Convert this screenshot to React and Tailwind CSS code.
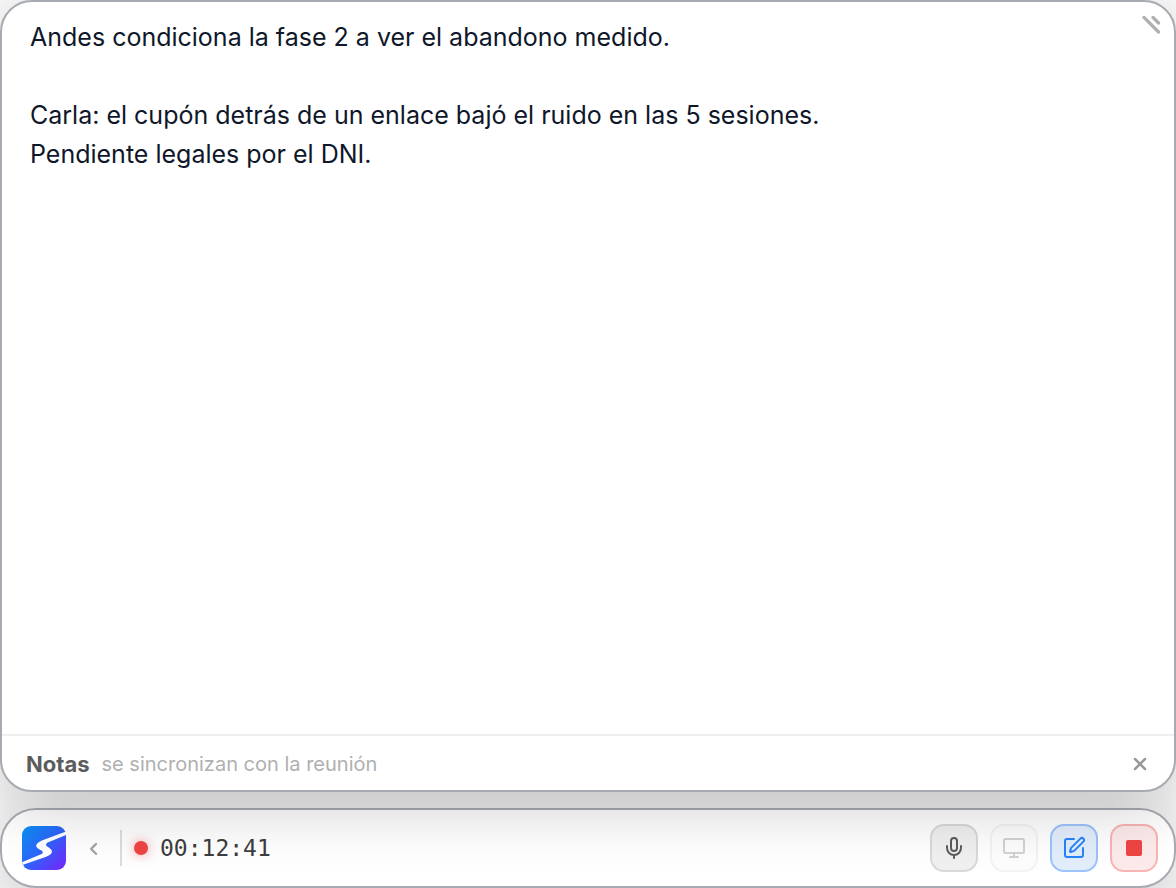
import { useState } from "react";
import { Mic, SquarePen } from "lucide-react";

const controlBase =
  "flex size-12 items-center justify-center rounded-[14px] border-2";

function Logo() {
  return (
    <svg viewBox="0 0 44 44" className="size-11" role="img" aria-label="Logo">
      <defs>
        <linearGradient id="logo-fill" x1="0" y1="0" x2="1" y2="1">
          <stop offset="0" stopColor="#0693f5" />
          <stop offset="0.5" stopColor="#2f64fb" />
          <stop offset="1" stopColor="#7a22fb" />
        </linearGradient>
      </defs>
      <rect width="44" height="44" rx="9" fill="url(#logo-fill)" />
      <path
        d="M44 5.400 L20.500 14.200 C14.500 16.500 12.500 19.800 16 22.600 C18 24.100 20.800 24.600 20.800 26.200 C20.800 27.600 19 28.400 16 29.600 L0 36.300 L1 38.800 L23.500 31 C28.500 29.200 31.300 26.800 29.300 23.800 C27.600 21.300 24 20.800 24 18.800 C24 17.300 25.500 16.600 27.500 15.800 L44 8.900 Z"
        fill="#fff"
      />
    </svg>
  );
}

function StrokeIcon({ children, className }) {
  return (
    <svg
      viewBox="0 0 24 24"
      fill="none"
      stroke="currentColor"
      strokeWidth="2"
      strokeLinecap="round"
      strokeLinejoin="round"
      className={className}
      aria-hidden="true"
    >
      {children}
    </svg>
  );
}

function NotesPanel() {
  const [notes, setNotes] = useState(
    "Andes condiciona la fase 2 a ver el abandono medido.\n\nCarla: el cupón detrás de un enlace bajó el ruido en las 5 sesiones.\nPendiente legales por el DNI."
  );
  return (
    <section className="relative z-10 flex grow flex-col overflow-hidden rounded-[32px] border-2 border-[#a7abb1] bg-white shadow-[0_16px_64px_rgba(0,0,0,0.2)]">
      <textarea
        aria-label="Notas de la reunión"
        value={notes}
        onChange={(e) => setNotes(e.target.value)}
        spellCheck={false}
        className="w-full grow resize-none bg-transparent px-7 py-4 text-[25px] leading-[39px] text-[#0f172a] outline-none"
      />
      <button
        type="button"
        aria-label="Cambiar tamaño"
        className="absolute top-3 right-3 text-[#b0b0b0]"
      >
        <svg viewBox="0 0 20 20" className="size-5" fill="none" stroke="currentColor" strokeWidth="3.3" strokeLinecap="round" aria-hidden="true">
          <path d="M2 3.400 L16.500 18 M11 3.400 L16.500 9" />
        </svg>
      </button>
      <footer className="flex h-14 items-center gap-3 border-t-2 border-[#efefef] px-6 pt-0.5">
        <h2 className="text-[22px] font-bold text-[#5c5c5c]">Notas</h2>
        <p className="text-[20px] text-[#b0b0b0]">se sincronizan con la reunión</p>
        <button type="button" aria-label="Cerrar notas" className="ml-auto text-[#999999]">
          <StrokeIcon className="size-5">
            <path d="M6 6 L18 18 M18 6 L6 18" strokeWidth="3" />
          </StrokeIcon>
        </button>
      </footer>
    </section>
  );
}

function RecorderBar() {
  return (
    <section className="flex h-20 items-center rounded-[36px] border-2 border-[#a7abb1] bg-white pr-4 pl-5 shadow-[0_16px_64px_rgba(0,0,0,0.2)]">
      <Logo />
      <button type="button" aria-label="Contraer" className="ml-4 flex w-6 justify-center text-[#a6a6a6]">
        <StrokeIcon className="size-5">
          <path d="M14.500 7 L8.500 13 L14.500 19" strokeWidth="2.7" />
        </StrokeIcon>
      </button>
      <div className="ml-3.5 h-9 w-0.5 bg-[#dddddd]" />
      <span className="ml-3 size-3.5 rounded-full bg-[#ef4444] shadow-[0_0_12px_rgba(239,68,68,0.5)]" />
      <time className="ml-3 font-['DejaVu_Sans_Mono',monospace] text-[23px] leading-8 text-[#3d3d3d]">
        00:12:41
      </time>
      <div className="ml-auto flex gap-3">
        <button type="button" aria-label="Micrófono" className={`${controlBase} border-[#d9d9d9] bg-[#f0f0f0] text-[#5c5c5c]`}>
          <Mic className="size-6" aria-hidden="true" />
        </button>
        <button type="button" aria-label="Compartir pantalla" className={`${controlBase} border-[#f3f3f3] bg-[#fdfdfd] text-[#d2d2d2]`}>
          <StrokeIcon className="size-6">
            <rect x="2" y="3" width="20" height="14" rx="1.5" />
            <path d="M12 17 V21 M8 21 H16" />
          </StrokeIcon>
        </button>
        <button type="button" aria-label="Notas" aria-pressed="true" className={`${controlBase} border-[#9cc3fb] bg-[#e3eefd] text-[#2684fb]`}>
          <SquarePen className="size-6" aria-hidden="true" />
        </button>
        <button type="button" aria-label="Detener grabación" className={`${controlBase} border-[#f9b4b4] bg-[#fdeaea] text-[#ef4444]`}>
          <span className="size-4 rounded-xs bg-current" />
        </button>
      </div>
    </section>
  );
}

export default function App() {
  return (
    <main className="flex min-h-screen flex-col gap-4 overflow-hidden bg-[#fafafa] font-[Inter,sans-serif]">
      <NotesPanel />
      <RecorderBar />
    </main>
  );
}
